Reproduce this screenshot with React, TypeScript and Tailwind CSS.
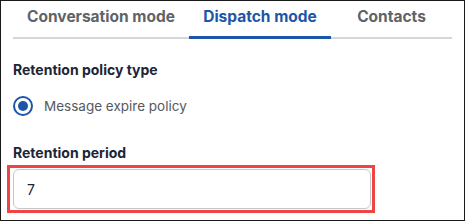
import React from 'react';

const tabs = [
  { label: 'Conversation mode', width: 'w-[176px]', active: false },
  { label: 'Dispatch mode', width: 'w-[142px]', active: true },
  { label: 'Contacts', width: 'flex-1', active: false },
];

const App: React.FC = () => {
  return (
    <div
      className="w-[465px] h-[221px] border border-[#1a1a1a] bg-white px-3 overflow-hidden"
      style={{ fontFamily: 'Inter, "Noto Sans", sans-serif' }}
    >
      {/* Tabs */}
      <div className="flex border-b-2 border-[#d3d7dc]">
        {tabs.map((tab) => (
          <div
            key={tab.label}
            className={`${tab.width} h-[36px] pt-[6px] text-center text-[15.5px] leading-5 font-bold ${
              tab.active
                ? 'text-[#1d56a6] border-b-[3px] border-[#1d56a6] -mb-[2px] h-[38px]'
                : 'text-[#5f6368]'
            }`}
          >
            {tab.label}
          </div>
        ))}
      </div>

      {/* Retention policy type */}
      <div className="mt-[21px] text-[14px] leading-5 font-bold text-[#1c2536]">
        Retention policy type
      </div>
      <div className="mt-4 flex items-center gap-[11px] h-5">
        <div className="w-5 h-5 rounded-full border-2 border-[#1d56a6] flex items-center justify-center">
          <div className="w-[10px] h-[10px] rounded-full bg-[#1d56a6]" />
        </div>
        <span className="text-[13.5px] leading-5 text-[#55595e]">Message expire policy</span>
      </div>

      {/* Retention period */}
      <div className="mt-[27px] text-[14px] leading-5 font-bold text-[#1c2536]">
        Retention period
      </div>
      <div className="relative mt-[6px] w-[358px]">
        <input
          readOnly
          value="7"
          className="w-full h-10 rounded-md border border-[#c6c6c6] px-[13px] text-[14px] text-[#1c2536] outline-none bg-white"
        />
        <div className="pointer-events-none absolute -left-[6px] -top-[4px] -right-[4px] -bottom-[4px] border-[3px] border-[#ee4444]" />
      </div>
    </div>
  );
};

export default App;
